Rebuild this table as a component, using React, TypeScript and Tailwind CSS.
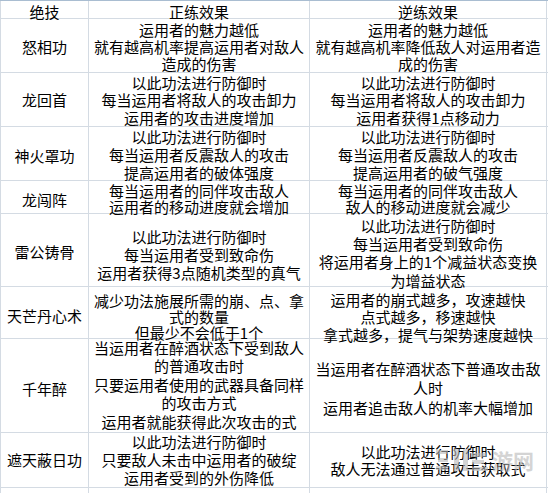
import React from "react";

type Cell = { lines: string[]; box: string; inner: string };
type Row = { name: string; nameInner: string; h: string; c2: Cell; c3: Cell };

const rows: Row[] = [
  {
    name: "怒相功",
    nameInner: "mt-[3px]",
    h: "h-[54px]",
    c2: { lines: ["运用者的魅力越低", "就有越高机率提高运用者对敌人", "造成的伤害"], box: "justify-end", inner: "leading-[17px]" },
    c3: { lines: ["运用者的魅力越低", "就有越高机率降低敌人对运用者造", "成的伤害"], box: "justify-end", inner: "leading-[17px]" },
  },
  {
    name: "龙回首",
    nameInner: "mt-[2px]",
    h: "h-[54px]",
    c2: { lines: ["以此功法进行防御时", "每当运用者将敌人的攻击卸力", "运用者的攻击进度增加"], box: "justify-end", inner: "leading-[17.5px]" },
    c3: { lines: ["以此功法进行防御时", "每当运用者将敌人的攻击卸力", "运用者获得1点移动力"], box: "justify-end", inner: "leading-[17.5px]" },
  },
  {
    name: "神火罩功",
    nameInner: "mt-[6px]",
    h: "h-[54px]",
    c2: { lines: ["以此功法进行防御时", "每当运用者反震敌人的攻击", "提高运用者的破体强度"], box: "justify-end", inner: "leading-[18px] -mb-[2px]" },
    c3: { lines: ["以此功法进行防御时", "每当运用者反震敌人的攻击", "提高运用者的破气强度"], box: "justify-end", inner: "leading-[18px] -mb-[2px]" },
  },
  {
    name: "龙闯阵",
    nameInner: "mt-[7px]",
    h: "h-[33px]",
    c2: { lines: ["每当运用者的同伴攻击敌人", "运用者的移动进度就会增加"], box: "justify-end", inner: "leading-[16px] -mb-[2px]" },
    c3: { lines: ["每当运用者的同伴攻击敌人", "敌人的移动进度就会减少"], box: "justify-end", inner: "leading-[16px] -mb-[2px]" },
  },
  {
    name: "雷公铸骨",
    nameInner: "mt-[5px]",
    h: "h-[73px]",
    c2: { lines: ["以此功法进行防御时", "每当运用者受到致命伤", "运用者获得3点随机类型的真气"], box: "justify-end", inner: "leading-[18px] mb-[4px]" },
    c3: { lines: ["以此功法进行防御时", "每当运用者受到致命伤", "将运用者身上的1个减益状态变换", "为增益状态"], box: "justify-end", inner: "leading-[18.3px] -mb-[4px]" },
  },
  {
    name: "天芒丹心术",
    nameInner: "mt-[8px]",
    h: "h-[52px]",
    c2: { lines: ["减少功法施展所需的崩、点、拿", "式的数量", "但最少不会低于1个"], box: "justify-end", inner: "leading-[16px] -mb-[3px]" },
    c3: { lines: ["运用者的崩式越多，攻速越快", "点式越多，移速越快", "拿式越多，提气与架势速度越快"], box: "justify-end", inner: "leading-[17.5px] -mb-[5px]" },
  },
  {
    name: "千年醉",
    nameInner: "mt-[7px]",
    h: "h-[94px]",
    c2: {
      lines: ["当运用者在醉酒状态下受到敌人", "的普通攻击时", "只要运用者使用的武器具备同样", "的攻击方式", "运用者就能获得此次攻击的式"],
      box: "justify-end",
      inner: "leading-[18.5px] mb-[1px]",
    },
    c3: { lines: ["当运用者在醉酒状态下普通攻击敌", "人时", "运用者追击敌人的机率大幅增加"], box: "justify-center", inner: "leading-[19.5px] mt-[5px]" },
  },
  {
    name: "遮天蔽日功",
    nameInner: "mt-[0px]",
    h: "h-[55px]",
    c2: { lines: ["以此功法进行防御时", "只要敌人未击中运用者的破绽", "运用者受到的外伤降低"], box: "justify-end", inner: "leading-[18px]" },
    c3: { lines: ["以此功法进行防御时", "敌人无法通过普通攻击获取式"], box: "justify-center", inner: "leading-[17.5px]" },
  },
];

function CellView({ cell, width, last }: { cell: Cell; width: string; last?: boolean }) {
  return (
    <div
      className={`${width} flex flex-col items-center ${cell.box} ${last ? "border-r" : "border-r"} border-[#d4dbe3]`}
    >
      <div className={`flex flex-col items-center ${cell.inner}`}>
        {cell.lines.map((l, i) => (
          <div key={i} className="whitespace-nowrap">
            {l}
          </div>
        ))}
      </div>
    </div>
  );
}

export default function App() {
  return (
    <div
      className="relative w-[548px] h-[493px] overflow-hidden bg-white text-black text-[15px]"
      style={{ fontFamily: '"Noto Sans CJK SC", "Noto Sans", sans-serif' }}
    >
      <div className="w-[548px] border-t border-[#a9bdd1]">
        <div className="flex h-[18px] border-b border-[#d4dbe3] leading-[18px]">
          <div className="w-[1px] bg-[#d4dbe3]" />
          <div className="w-[88px] border-r border-[#d4dbe3] flex justify-center">
            <span className="mt-[2px]">绝技</span>
          </div>
          <div className="w-[221px] border-r border-[#d4dbe3] flex justify-center">
            <span className="mt-[2px]">正练效果</span>
          </div>
          <div className="w-[237px] border-r border-[#d4dbe3] flex justify-center">
            <span className="mt-[2px]">逆练效果</span>
          </div>
        </div>
        {rows.map((r, i) => (
          <div key={i} className={`flex ${r.h} border-b border-[#d4dbe3]`}>
            <div className="w-[1px] bg-[#d4dbe3]" />
            <div className="w-[88px] border-r border-[#d4dbe3] flex items-center justify-center">
              <span className={`whitespace-nowrap ${r.nameInner}`}>{r.name}</span>
            </div>
            <CellView cell={r.c2} width="w-[221px]" />
            <CellView cell={r.c3} width="w-[237px]" last />
          </div>
        ))}
        <div className="flex h-[10px]">
          <div className="w-[1px] bg-[#d4dbe3]" />
          <div className="w-[88px] border-r border-[#d4dbe3]" />
          <div className="w-[221px] border-r border-[#d4dbe3]" />
          <div className="w-[237px] border-r border-[#d4dbe3]" />
        </div>
      </div>
      <div className="absolute left-[434px] top-[447px] flex items-center gap-[2px] opacity-60 pointer-events-none">
        <svg width="56" height="26" viewBox="0 0 56 26">
          <g fill="#b9b9b9">
            <rect x="2" y="3" width="12" height="4" />
            <rect x="4" y="11" width="10" height="4" />
            <rect x="2" y="19" width="12" height="4" />
            <rect x="20" y="2" width="5" height="22" />
            <rect x="29" y="2" width="5" height="22" />
            <rect x="38" y="6" width="14" height="4" />
            <rect x="38" y="13" width="12" height="4" />
            <rect x="38" y="20" width="16" height="4" />
          </g>
        </svg>
        <span className="text-[21px] font-bold text-[#b9b9b9] leading-none">游网</span>
      </div>
    </div>
  );
}
